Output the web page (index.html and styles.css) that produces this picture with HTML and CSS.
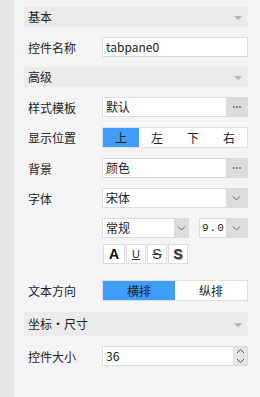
FILE: index.html
```html
<!DOCTYPE html>
<html lang="zh">
<head>
    <meta charset="UTF-8">
    <meta name="viewport" content="width=device-width, initial-scale=1.0">
    <title>属性面板</title>
    <link rel="stylesheet" href="styles.css">
</head>

<body>
    <div class="strip"></div>

    <div class="panel">
        <div class="section-head">
            <span>基本</span>
            <i class="caret"></i>
        </div>

        <div class="row">
            <label class="row-label">控件名称</label>
            <div class="field"><span class="value">tabpane0</span></div>
        </div>

        <div class="section-head">
            <span>高级</span>
            <i class="caret"></i>
        </div>

        <div class="row">
            <label class="row-label">样式模板</label>
            <div class="field">
                <span class="value">默认</span>
                <span class="side-btn"><i class="dot"></i><i class="dot"></i><i class="dot"></i></span>
            </div>
        </div>

        <div class="row">
            <label class="row-label">显示位置</label>
            <div class="segment">
                <span class="seg active">上</span>
                <span class="seg">左</span>
                <span class="seg">下</span>
                <span class="seg">右</span>
            </div>
        </div>

        <div class="row">
            <label class="row-label">背景</label>
            <div class="field">
                <span class="value">颜色</span>
                <span class="side-btn"><i class="dot"></i><i class="dot"></i><i class="dot"></i></span>
            </div>
        </div>

        <div class="row row-top">
            <label class="row-label">字体</label>
            <div class="font-box">
                <div class="field">
                    <span class="value">宋体</span>
                    <span class="side-btn arrow">
                        <svg width="9" height="5" viewBox="0 0 9 5"><path d="M1 0.5 L4.5 4 L8 0.5" fill="none" stroke="#666" stroke-width="1"/></svg>
                    </span>
                </div>
                <div class="font-line">
                    <div class="field style-select">
                        <span class="value">常规</span>
                        <span class="side-btn arrow narrow">
                            <svg width="9" height="5" viewBox="0 0 9 5"><path d="M1 0.5 L4.5 4 L8 0.5" fill="none" stroke="#666" stroke-width="1"/></svg>
                        </span>
                    </div>
                    <div class="field size-select">
                        <span class="value mono">9.0</span>
                        <span class="side-btn arrow">
                            <svg width="9" height="5" viewBox="0 0 9 5"><path d="M1 0.5 L4.5 4 L8 0.5" fill="none" stroke="#666" stroke-width="1"/></svg>
                        </span>
                    </div>
                </div>
                <div class="style-btns">
                    <span class="sbtn bold">A</span>
                    <span class="sbtn under">U</span>
                    <span class="sbtn strike">S</span>
                    <span class="sbtn shadow">S</span>
                </div>
            </div>
        </div>

        <div class="row row-dir">
            <label class="row-label">文本方向</label>
            <div class="segment">
                <span class="seg active">横排</span>
                <span class="seg">纵排</span>
            </div>
        </div>

        <div class="section-head tall">
            <span>坐标・尺寸</span>
            <i class="caret"></i>
        </div>

        <div class="row">
            <label class="row-label">控件大小</label>
            <div class="field">
                <span class="value">36</span>
                <span class="spin">
                    <svg width="9" height="18" viewBox="0 0 9 18"><path d="M1 6 L4.5 2.5 L8 6" fill="none" stroke="#555" stroke-width="1"/><path d="M1 12 L4.5 15.5 L8 12" fill="none" stroke="#555" stroke-width="1"/></svg>
                </span>
            </div>
        </div>
    </div>
</body>
</html>
```

FILE: styles.css
```css
body {
    margin: 0;
    padding: 0;
    background-color: #f4f4f6;
    font-family: "Noto Sans CJK SC", "Liberation Sans", sans-serif;
    font-size: 12px;
    color: #222;
    display: flex;
    height: 397px;
    overflow: hidden;
}

.strip {
    width: 14px;
    flex: none;
    background-color: #e6e6e6;
}

.panel {
    flex: 1;
    padding: 7px 12px 0 10px;
    display: flex;
    flex-direction: column;
    gap: 10px;
}

.section-head {
    height: 20px;
    background-color: #ebebeb;
    display: flex;
    align-items: center;
    justify-content: space-between;
    padding: 0 6px 0 4px;
    font-size: 12px;
    line-height: 20px;
}

.section-head.tall {
    height: 24px;
    margin-top: 1px;
}

.caret {
    width: 0;
    height: 0;
    border-left: 4px solid transparent;
    border-right: 4px solid transparent;
    border-top: 4px solid #b4b4b4;
    margin-top: 2px;
}

.row {
    display: flex;
    align-items: center;
}

.row-top {
    align-items: flex-start;
}

.row-top .row-label {
    margin-top: 2px;
}

.row-dir {
    margin-top: 6px;
}

.row-label {
    width: 78px;
    flex: none;
    padding-left: 4px;
    box-sizing: border-box;
}

.field {
    flex: 1;
    height: 20px;
    box-sizing: border-box;
    border: 1px solid #dcdcdc;
    background-color: #fff;
    display: flex;
    align-items: stretch;
}

.value {
    flex: 1;
    padding-left: 3px;
    line-height: 18px;
    white-space: nowrap;
    overflow: hidden;
}

.mono {
    font-family: "Liberation Mono", monospace;
    font-size: 11px;
    letter-spacing: 1px;
    padding-left: 2px;
}

.side-btn {
    width: 21px;
    flex: none;
    background-color: #dcdcdf;
    display: flex;
    align-items: center;
    justify-content: center;
    gap: 1px;
}

.side-btn.narrow {
    width: 14px;
}

.dot {
    width: 2px;
    height: 2px;
    background-color: #8a8a8a;
}

.spin {
    width: 14px;
    flex: none;
    background-color: #e4e4e6;
    display: flex;
    align-items: center;
    justify-content: center;
}

.segment {
    flex: 1;
    height: 21px;
    box-sizing: border-box;
    border: 1px solid #e0e0e0;
    background-color: #fff;
    display: flex;
}

.seg {
    flex: 1;
    text-align: center;
    line-height: 19px;
    font-size: 12px;
}

.seg.active {
    background-color: #409df9;
}

.font-box {
    flex: 1;
    display: flex;
    flex-direction: column;
    gap: 10px;
}

.font-line {
    display: flex;
    justify-content: space-between;
}

.style-select {
    flex: none;
    width: 87px;
}

.size-select {
    flex: none;
    width: 49px;
}

.style-btns {
    display: flex;
    gap: 1px;
    margin-top: -4px;
    padding-left: 1px;
}

.sbtn {
    width: 20px;
    height: 20px;
    box-sizing: border-box;
    border: 1px solid #dcdcdc;
    background-color: #fff;
    font-family: "Liberation Sans", sans-serif;
    font-weight: bold;
    font-size: 13px;
    line-height: 18px;
    text-align: center;
    color: #333;
}

.sbtn.bold {
    width: 22px;
    font-size: 14px;
    color: #111;
}

.sbtn.under {
    text-decoration: underline;
    font-size: 11px;
    font-weight: normal;
}

.sbtn.strike {
    text-decoration: line-through;
    font-weight: normal;
    font-size: 14px;
}

.sbtn.shadow {
    font-size: 14px;
    text-shadow: 1px 1px 1px #999;
}
```
